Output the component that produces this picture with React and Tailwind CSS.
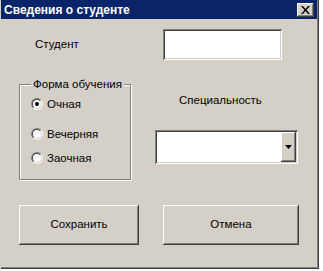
import React, { useState } from "react";

const raised =
  "shadow-[inset_-1px_-1px_#404040,inset_1px_1px_#ffffff,inset_-2px_-2px_#808080,inset_2px_2px_#d4d0c8]";
const sunken =
  "shadow-[inset_1px_1px_#808080,inset_-1px_-1px_#ffffff,inset_2px_2px_#404040,inset_-2px_-2px_#d4d0c8]";

const Radio = ({ checked, label, onClick }) => (
  <button onClick={onClick} className="h-[14px] flex items-center gap-[4px] text-left">
    <span className="relative w-[12px] h-[12px] rounded-full border border-[#808080] border-r-white border-b-white">
      <span className="absolute inset-0 rounded-full border border-[#404040] border-r-[#d4d0c8] border-b-[#d4d0c8] bg-white flex items-center justify-center">
        {checked && <span className="w-[4px] h-[4px] rounded-full bg-black" />}
      </span>
    </span>
    <span className="leading-[14px]">{label}</span>
  </button>
);

const App = () => {
  const [form, setForm] = useState("Очная");

  return (
    <div className="w-[323px] h-[271px] bg-white font-['Liberation_Sans',Arial,sans-serif] text-[11.5px] text-black">
      <div className="w-[319px] h-[269px] bg-[#d4d0c8] border-l border-l-[#d4d0c8] shadow-[inset_-1px_-1px_#404040,inset_-2px_-2px_#808080] flex flex-col">
        {/* title bar */}
        <div className="h-[19px] mr-[2px] bg-[#0a246a] flex items-center justify-between pl-[3px] pr-[3px]">
          <span className="text-white font-bold text-[12px] leading-none">
            Сведения о студенте
          </span>
          <button
            className={`w-[17px] h-[14px] bg-[#d4d0c8] ${raised} flex items-center justify-center`}
          >
            <svg width="9" height="8" viewBox="0 0 9 8">
              <path d="M0 0h2l2.5 3 2.5-3h2L5.5 4 9 8H7L4.5 5 2 8H0l3.5-4z" fill="#000" />
            </svg>
          </button>
        </div>

        {/* student row */}
        <div className="flex items-center mt-[10px]">
          <span className="ml-[34px] w-[128px]">Студент</span>
          <input className={`w-[119px] h-[31px] bg-white ${sunken} px-[4px] outline-none`} />
        </div>

        {/* form + speciality */}
        <div className="flex mt-[24px]">
          <div className="relative ml-[18px] w-[112px] h-[96px] border border-[#808080] shadow-[1px_1px_#ffffff,inset_1px_1px_#ffffff] pl-[11px] pt-[12px]">
            <span className="absolute top-[-8px] left-[11px] px-[2px] bg-[#d4d0c8] leading-[14px] whitespace-nowrap">
              Форма обучения
            </span>
            <div className="flex flex-col">
              <Radio checked={form === "Очная"} label="Очная" onClick={() => setForm("Очная")} />
              <div className="mt-[16px]">
                <Radio checked={form === "Вечерняя"} label="Вечерняя" onClick={() => setForm("Вечерняя")} />
              </div>
              <div className="mt-[10px]">
                <Radio checked={form === "Заочная"} label="Заочная" onClick={() => setForm("Заочная")} />
              </div>
            </div>
          </div>
          <div className="ml-[24px] flex flex-col">
            <span className="ml-[24px] mt-[9px] leading-[14px]">Специальность</span>
            <div className={`mt-[23px] w-[143px] h-[34px] bg-white ${sunken} flex justify-end p-[2px]`}>
              <div className={`w-[15px] h-full bg-[#d4d0c8] ${raised} flex items-center justify-center`}>
                <svg width="7" height="4" viewBox="0 0 7 4">
                  <path d="M0 0h7L3.5 4z" fill="#000" />
                </svg>
              </div>
            </div>
          </div>
        </div>

        {/* buttons */}
        <div className="flex mt-[25px]">
          <button className={`ml-[18px] w-[120px] h-[40px] bg-[#d4d0c8] ${raised}`}>Сохранить</button>
          <button className={`ml-[24px] w-[136px] h-[40px] bg-[#d4d0c8] ${raised}`}>Отмена</button>
        </div>
      </div>
    </div>
  );
};

export default App;
